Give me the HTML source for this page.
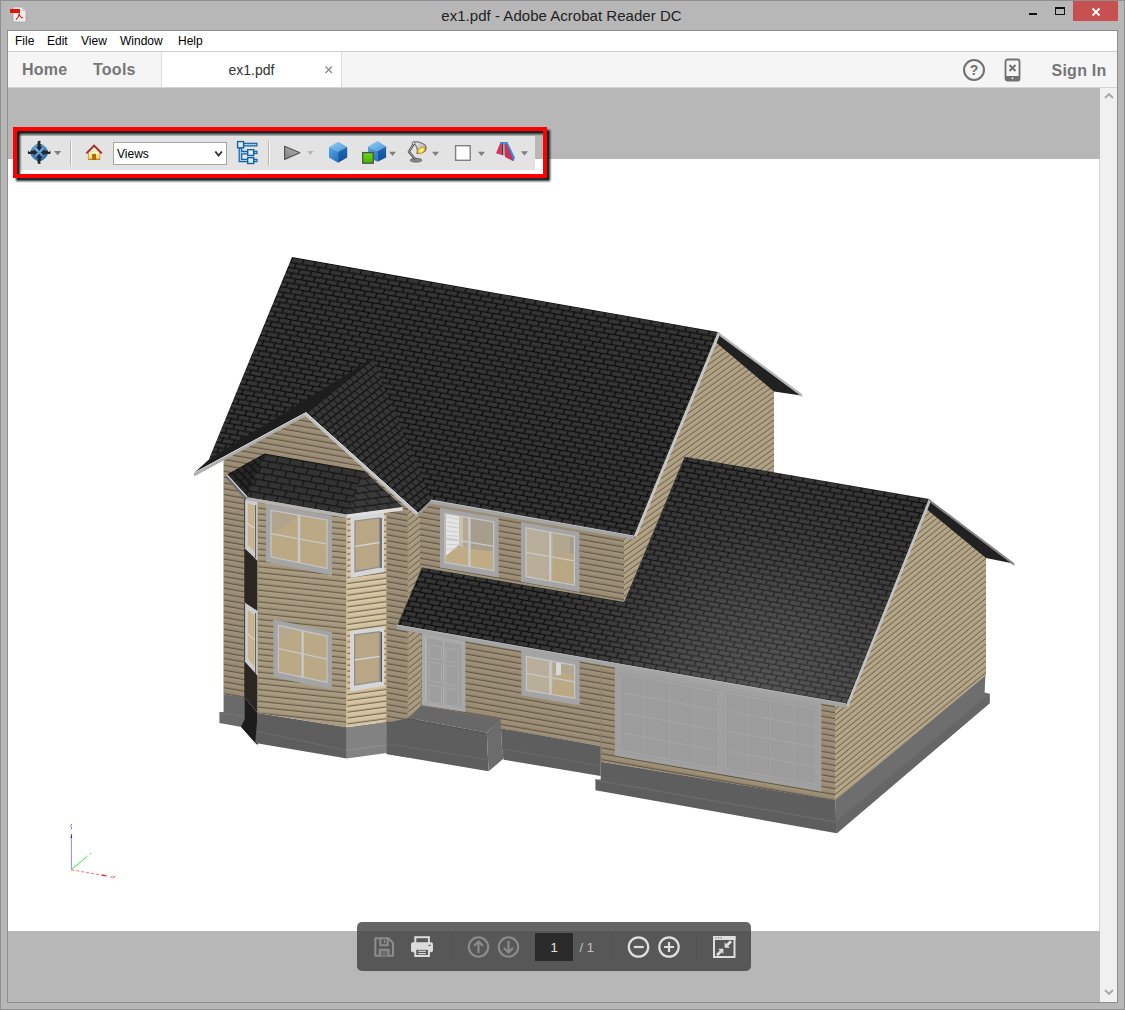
<!DOCTYPE html>
<html><head><meta charset="utf-8"><title>ex1.pdf - Adobe Acrobat Reader DC</title>
<style>
*{box-sizing:border-box;margin:0;padding:0}
html,body{width:1125px;height:1010px;overflow:hidden;background:#b7b7b7;font-family:"Liberation Sans",sans-serif}
#win{position:absolute;left:0;top:0;width:1125px;height:1010px;background:#b7b7b7;border:1px solid #8f8f8f}
.abs{position:absolute}
#title{position:absolute;left:-2px;top:6px;width:1125px;text-align:center;font-size:15px;color:#222;letter-spacing:0.03px}
#inner{position:absolute;left:6px;top:29px;width:1111px;height:973px;border:1px solid #8e8e8e;background:#b7b7b7}
#menubar{position:absolute;left:0;top:0;width:1109px;height:20px;background:#fff}
#menubar span{position:absolute;top:3px;font-size:12px;color:#000}
#tabline{position:absolute;left:0;top:20px;width:1109px;height:1px;background:#cdcdcd}
#tabbar{position:absolute;left:0;top:21px;width:1109px;height:36px;background:#f5f5f5;border-bottom:1px solid #d4d4d4}
#tab{position:absolute;left:153px;top:0;width:181px;height:35px;background:#fff;border-left:1px solid #dcdcdc;border-right:1px solid #dcdcdc}
.nav{position:absolute;top:9px;font-size:16px;font-weight:bold;color:#767676;letter-spacing:0.25px}
#doc{position:absolute;left:0;top:57px;width:1092px;height:914px;background:#b7b7b7}
#page{position:absolute;left:0;top:71px;width:1092px;height:772px;background:#fff;border-right:1px solid #d4d4d4}
#scroll{position:absolute;left:1092px;top:57px;width:17px;height:914px;background:#f0f0f0}
</style></head><body>
<div id="win">
 <!-- app icon -->
 <svg class="abs" style="left:9px;top:5px" width="18" height="18" viewBox="0 0 18 18">
  <path d="M3 1 H12 L16 5 V16 H3 Z" fill="#ececec" stroke="#9a9a9a" stroke-width="0.6"/>
  <path d="M12 1 V5 H16 Z" fill="#cfcfcf"/>
  <rect x="0" y="3" width="10" height="4" fill="#e1140a"/>
  <path d="M6 13.5 C8 12 9 9.5 9.2 7.5 C9.4 10 10.5 11.5 13 12" fill="none" stroke="#e1140a" stroke-width="1.1"/>
 </svg>
 <div id="title">ex1.pdf - Adobe Acrobat Reader DC</div>
 <!-- window controls -->
 <div class="abs" style="left:1028px;top:12px;width:8px;height:2px;background:#111"></div>
 <div class="abs" style="left:1054px;top:6px;width:10px;height:8px;border:1px solid #111;border-top-width:2px"></div>
 <div class="abs" style="left:1072px;top:0;width:45px;height:20px;background:#c75050"></div>
 <svg class="abs" style="left:1089px;top:5px" width="12" height="12" viewBox="0 0 12 12"><path d="M2.5 2.5 L9.5 9.5 M9.5 2.5 L2.5 9.5" stroke="#fff" stroke-width="1.8"/></svg>

 <div id="inner">
  <div id="menubar">
   <span style="left:7px">File</span><span style="left:39px">Edit</span><span style="left:73px">View</span><span style="left:112px">Window</span><span style="left:170px">Help</span>
  </div>
  <div id="tabline"></div>
  <div id="tabbar">
   <div class="nav" style="left:14px">Home</div>
   <div class="nav" style="left:85px">Tools</div>
   <div id="tab">
     <div class="abs" style="left:0;top:10px;width:179px;text-align:center;font-size:14px;color:#333">ex1.pdf</div>
     <svg class="abs" style="left:162px;top:13px" width="10" height="10" viewBox="0 0 10 10"><path d="M1.5 1.5 L8 8 M8 1.5 L1.5 8" stroke="#8a8a8a" stroke-width="1.4"/></svg>
   </div>
   <!-- right icons -->
   <svg class="abs" style="left:953.7px;top:5.7px" width="24" height="24" viewBox="0 0 24 24">
     <circle cx="12" cy="12" r="10" fill="none" stroke="#707070" stroke-width="2"/>
     <text x="12" y="17" font-size="14" font-weight="bold" fill="#707070" text-anchor="middle" font-family="Liberation Sans">?</text>
   </svg>
   <svg class="abs" style="left:996px;top:6px" width="18" height="26" viewBox="0 0 18 26">
     <rect x="1.5" y="1.5" width="14" height="21" rx="2" fill="#f5f5f5" stroke="#707070" stroke-width="1.8"/>
     <rect x="1.5" y="18" width="14" height="4.5" fill="#707070"/>
     <path d="M5.5 7 L11.5 13 M11.5 7 L5.5 13" stroke="#707070" stroke-width="2"/>
     <rect x="7.7" y="19.5" width="1.6" height="1.6" fill="#f5f5f5"/>
   </svg>
   <div class="nav" style="left:1043.5px;top:10px;font-weight:bold">Sign In</div>
  </div>
  <div id="doc">
    <div id="page"></div>
  </div>
  <div id="scroll">
    <svg class="abs" style="left:4px;top:4px" width="10" height="8" viewBox="0 0 10 8"><path d="M1 6 L5 2 L9 6" fill="none" stroke="#a6a6a6" stroke-width="1.8"/></svg>
    <svg class="abs" style="left:4px;top:900px" width="10" height="8" viewBox="0 0 10 8"><path d="M1 2 L5 6 L9 2" fill="none" stroke="#a6a6a6" stroke-width="1.8"/></svg>
  </div>
 </div>

 <!-- 3D house scene (absolute page coords) -->
 <svg class="abs" style="left:-1px;top:-1px" width="1125" height="1010" viewBox="0 0 1125 1010">
  <defs>
   <pattern id="sh" width="11.6" height="10" patternUnits="userSpaceOnUse" patternTransform="matrix(1,0.175,-0.407,0.97,292,257)">
     <rect width="11.6" height="10" fill="#353535"/>
     <rect y="4.2" width="11.6" height="0.8" fill="#2d2d2d"/>
     <rect y="9.2" width="11.6" height="0.8" fill="#2d2d2d"/>
     <rect y="0" width="11.6" height="1.0" fill="#0b0b0b"/>
     <rect y="5" width="11.6" height="1.0" fill="#0b0b0b"/>
     <rect x="0" y="0" width="1.25" height="5" fill="#090909"/>
     <rect x="5.8" y="5" width="1.25" height="5" fill="#090909"/>
   </pattern>

   <pattern id="sh2" width="7.6" height="10" patternUnits="userSpaceOnUse" patternTransform="matrix(0.62,-0.5,1,0.9,306,412)">
     <rect width="7.6" height="10" fill="#373737"/>
     <rect y="0" width="7.6" height="1.1" fill="#131313"/>
     <rect y="5" width="7.6" height="1.1" fill="#131313"/>
     <rect x="0" y="0" width="1.1" height="5" fill="#111"/>
     <rect x="3.8" y="5" width="1.1" height="5" fill="#111"/>
   </pattern>
   <pattern id="shb" width="13" height="12.4" patternUnits="userSpaceOnUse" patternTransform="matrix(1,0.175,-0.35,1,264.6,453.5)">
     <rect width="13" height="12.4" fill="#333"/>
     <rect y="0" width="13" height="1.3" fill="#171717"/>
     <rect y="6.2" width="13" height="1.3" fill="#171717"/>
     <rect x="0" y="0" width="1.2" height="6.2" fill="#141414"/>
     <rect x="6.5" y="6.2" width="1.2" height="6.2" fill="#141414"/>
   </pattern>
   <pattern id="shbl" width="8" height="10" patternUnits="userSpaceOnUse" patternTransform="matrix(0.7,0.75,-0.9,0.8,264.6,453.5)">
     <rect width="8" height="10" fill="#262626"/>
     <rect y="0" width="8" height="1.2" fill="#111"/>
     <rect y="5" width="8" height="1.2" fill="#111"/>
     <rect x="0" y="0" width="1.1" height="5" fill="#111"/>
     <rect x="4" y="5" width="1.1" height="5" fill="#111"/>
   </pattern>
   <pattern id="shbr" width="12" height="12.4" patternUnits="userSpaceOnUse" patternTransform="matrix(1,-0.13,0.9,1,364,471)">
     <rect width="12" height="12.4" fill="#3a3a3a"/>
     <rect y="0" width="12" height="1.3" fill="#1c1c1c"/>
     <rect y="6.2" width="12" height="1.3" fill="#1c1c1c"/>
     <rect x="0" y="0" width="1.2" height="6.2" fill="#1a1a1a"/>
     <rect x="6" y="6.2" width="1.2" height="6.2" fill="#1a1a1a"/>
   </pattern>
   <radialGradient id="lrg" gradientUnits="userSpaceOnUse" cx="765" cy="705" r="250">
     <stop offset="0" stop-color="#ffffff" stop-opacity="0.17"/>
     <stop offset="0.35" stop-color="#ffffff" stop-opacity="0.12"/>
     <stop offset="0.7" stop-color="#ffffff" stop-opacity="0.04"/>
     <stop offset="1" stop-color="#ffffff" stop-opacity="0"/>
   </radialGradient>
   <!-- siding -->
   <pattern id="sdF" width="40" height="5.85" patternUnits="userSpaceOnUse" patternTransform="matrix(1,0.175,0,1,223,460)">
     <rect width="40" height="5.85" fill="#9b8d75"/>
     <rect y="0" width="40" height="1.6" fill="#a19379"/>
     <rect y="4.05" width="40" height="0.8" fill="#897c67"/>
     <rect y="4.85" width="40" height="1.0" fill="#60564a"/>
   </pattern>
   <pattern id="sdB" width="40" height="5.85" patternUnits="userSpaceOnUse" patternTransform="matrix(1,0.105,0,1,257,497)">
     <rect width="40" height="5.85" fill="#a6987d"/>
     <rect y="0" width="40" height="1.6" fill="#ac9e82"/>
     <rect y="4.05" width="40" height="0.8" fill="#93866e"/>
     <rect y="4.85" width="40" height="1.0" fill="#665c4b"/>
   </pattern>
   <pattern id="sdR" width="40" height="5.85" patternUnits="userSpaceOnUse" patternTransform="matrix(1,-0.135,0,1,347,514)">
     <rect width="40" height="5.85" fill="#d3c2a0"/>
     <rect y="0" width="40" height="1.6" fill="#d9c8a6"/>
     <rect y="4.05" width="40" height="0.8" fill="#b3a385"/>
     <rect y="4.85" width="40" height="1.0" fill="#766b57"/>
   </pattern>
   <pattern id="sdRet" width="40" height="6.2" patternUnits="userSpaceOnUse" patternTransform="matrix(1,-0.8,0,1,408,508)">
     <rect width="40" height="6.2" fill="#a99b80"/>
     <rect y="0" width="40" height="1.6" fill="#ad9f84"/>
     <rect y="4.40" width="40" height="0.8" fill="#978a72"/>
     <rect y="5.20" width="40" height="1.0" fill="#6b614f"/>
   </pattern>
   <pattern id="sdS" width="40" height="5.7" patternUnits="userSpaceOnUse" patternTransform="matrix(1,-0.72,0,1,624,540)">
     <rect width="40" height="5.7" fill="#b0a185"/>
     <rect y="0" width="40" height="1.4" fill="#b3a487"/>
     <rect y="4.00" width="40" height="0.7" fill="#a09278"/>
     <rect y="4.70" width="40" height="1.0" fill="#6b614f"/>
   </pattern>
   <pattern id="sdS2" width="40" height="5.7" patternUnits="userSpaceOnUse" patternTransform="matrix(1,-0.81,0,1,835,801)">
     <rect width="40" height="5.7" fill="#b4a587"/>
     <rect y="0" width="40" height="1.4" fill="#b7a889"/>
     <rect y="4.00" width="40" height="0.7" fill="#a39579"/>
     <rect y="4.70" width="40" height="1.0" fill="#6b614f"/>
   </pattern>
  </defs>
  <polygon points="622.0,540.0 717.0,334.0 774.0,390.0 774.0,473.0 685.0,457.0 624.0,602.0" fill="url(#sdS)" />
<polygon points="929.0,499.0 986.0,553.0 986.0,676.0 835.0,801.0 835.0,700.0 846.0,706.0" fill="url(#sdS2)" />
<polygon points="715.5,342.0 774.0,391.5 801.0,395.5 718.5,333.0" fill="#212121" />
<polygon points="927.0,509.5 986.0,558.0 1013.0,563.5 929.5,500.0" fill="#212121" />
<polygon points="223.5,459.0 306.0,414.0 408.0,508.0 408.0,727.0 223.5,694.5" fill="url(#sdF)" />
<polygon points="408.0,508.0 421.0,513.0 421.0,716.0 408.0,727.0" fill="url(#sdRet)" />
<polygon points="420.0,500.0 624.0,534.0 624.0,606.0 420.0,570.0" fill="url(#sdF)" />
<polygon points="421.0,600.0 601.0,640.0 601.0,746.0 421.0,714.5" fill="url(#sdF)" />
<polygon points="601.0,650.0 835.0,700.0 835.0,801.0 601.0,761.7" fill="url(#sdF)" />
<line x1="601.0" y1="655.0" x2="601.0" y2="762.0" stroke="#8f8067" stroke-width="1" />
<polygon points="223.6,694.4 244.3,697.0 244.3,727.5 219.4,723.0 219.4,712.0 223.6,712.0" fill="#6a6a6a" />
<line x1="219.4" y1="712.3" x2="244.0" y2="716.5" stroke="#777" stroke-width="1" />
<polygon points="244.3,697.0 257.7,713.0 257.7,745.0 255.2,743.0 241.0,727.0 244.3,720.0" fill="#1c1c1c" />
<polygon points="257.7,713.0 346.8,727.2 346.8,758.6 255.2,743.0" fill="#5e5e5e" />
<line x1="257.0" y1="731.7" x2="346.8" y2="750.4" stroke="#6a6a6a" stroke-width="1.2" />
<polygon points="346.8,727.2 386.7,721.8 386.7,752.9 346.8,758.6" fill="#828282" />
<line x1="346.8" y1="750.4" x2="386.7" y2="744.8" stroke="#8e8e8e" stroke-width="1.2" />
<polygon points="386.7,721.8 408.2,725.0 408.2,757.6 386.7,754.0" fill="#5e5e5e" />
<polygon points="408.2,718.1 421.1,705.4 500.6,719.3 486.8,732.7" fill="#686868" />
<polygon points="408.2,718.1 486.8,732.7 488.6,771.3 386.5,754.0 386.5,723.0" fill="#5e5e5e" />
<line x1="386.5" y1="743.6" x2="487.5" y2="759.7" stroke="#696969" stroke-width="1.2" />
<line x1="408.2" y1="719.0" x2="486.8" y2="733.6" stroke="#555" stroke-width="1" />
<polygon points="486.8,732.7 500.6,719.3 502.0,748.2 503.6,758.6 488.6,771.3" fill="#6c6c6c" />
<polygon points="501.0,728.3 600.7,745.9 600.7,776.0 503.6,759.7 502.0,748.0" fill="#5e5e5e" />
<line x1="502.5" y1="749.0" x2="600.5" y2="766.0" stroke="#696969" stroke-width="1.2" />
<polygon points="600.7,745.9 601.0,761.7 835.2,800.6 836.8,833.2 595.4,790.3 595.4,779.4 600.7,779.4" fill="#5e5e5e" />
<line x1="595.4" y1="780.2" x2="835.6" y2="822.0" stroke="#6b6b6b" stroke-width="1.3" />
<polygon points="835.2,800.6 985.4,675.8 984.6,692.5 989.6,693.7 989.6,703.2 836.8,833.2 835.6,822.0" fill="#6e6e6e" />
<polygon points="835.6,822.0 989.6,693.7 989.6,703.2 836.8,833.2" fill="#666" />
<polygon points="244.3,480.0 257.7,497.0 257.7,713.0 244.3,697.0" fill="#2b2621" />
<polygon points="257.7,497.0 346.8,514.5 346.8,727.2 257.7,713.0" fill="url(#sdB)" />
<polygon points="346.8,514.5 386.7,509.0 386.7,721.8 346.8,727.2" fill="url(#sdR)" />
<line x1="346.8" y1="515.0" x2="346.8" y2="727.0" stroke="#d8c5a0" stroke-width="1" />
<line x1="386.7" y1="510.0" x2="386.7" y2="721.0" stroke="#a69477" stroke-width="1" />
<line x1="408.0" y1="510.0" x2="408.0" y2="717.0" stroke="#a08f72" stroke-width="1" />
<line x1="257.7" y1="500.0" x2="257.7" y2="713.0" stroke="#9c8b6f" stroke-width="1" />
<polygon points="266.0,504.5 332.0,515.7 332.0,575.5 266.0,561.8" fill="#a4a4a4" />
<polygon points="271.0,510.3 327.0,519.9 327.0,568.5 271.0,556.8" fill="#bba885" />
<clipPath id="c38"><polygon points="271.0,510.3 327.0,519.9 327.0,568.5 271.0,556.8"/></clipPath>
<g clip-path="url(#c38)">
<polygon points="271.0,509.0 301.0,514.0 271.0,535.0" fill="#b1a38c" />
</g>
<polygon points="271.0,510.3 327.0,519.9 327.0,568.5 271.0,556.8" fill="none" stroke="#c6c6c6" stroke-width="1.2"/>
<line x1="299.0" y1="515.1" x2="299.0" y2="562.6" stroke="#c9c9c9" stroke-width="2.4" />
<line x1="271.0" y1="533.6" x2="327.0" y2="544.2" stroke="#c9c9c9" stroke-width="1.3" />
<polygon points="350.5,517.0 384.0,513.0 384.0,571.7 350.5,578.0" fill="#d6d6d6" />
<polygon points="355.0,521.0 379.5,518.0 379.5,567.0 355.0,571.7" fill="#b9a684" />
<clipPath id="c47"><polygon points="355.0,521.0 379.5,518.0 379.5,567.0 355.0,571.7"/></clipPath>
<polygon points="355.0,521.0 379.5,518.0 379.5,567.0 355.0,571.7" fill="none" stroke="#8c8c8c" stroke-width="1.2"/>
<line x1="355.0" y1="546.3" x2="379.5" y2="542.5" stroke="#d6d6d6" stroke-width="1.3" />
<line x1="381.0" y1="518.0" x2="381.0" y2="568.0" stroke="#333" stroke-width="1.2" />
<polygon points="244.3,497.5 257.7,501.0 257.7,561.0 244.3,548.0" fill="#cdcdcd" />
<polygon points="247.8,503.0 254.6,505.5 254.6,552.0 247.8,545.0" fill="#c7b48f" />
<line x1="247.8" y1="524.0" x2="254.6" y2="528.0" stroke="#e2e2e2" stroke-width="1" />
<line x1="244.6" y1="498.0" x2="244.6" y2="548.0" stroke="#3c3c3c" stroke-width="1" />
<line x1="255.6" y1="505.0" x2="255.6" y2="558.0" stroke="#555" stroke-width="1" />
<polygon points="273.4,619.2 331.9,632.2 331.9,689.4 273.4,677.0" fill="#a4a4a4" />
<polygon points="278.4,625.3 326.9,636.1 326.9,682.3 278.4,672.1" fill="#bba885" />
<clipPath id="c58"><polygon points="278.4,625.3 326.9,636.1 326.9,682.3 278.4,672.1"/></clipPath>
<g clip-path="url(#c58)">
<polygon points="278.0,624.0 297.0,628.0 278.0,645.0" fill="#b5a893" />
</g>
<polygon points="278.4,625.3 326.9,636.1 326.9,682.3 278.4,672.1" fill="none" stroke="#c6c6c6" stroke-width="1.2"/>
<line x1="302.6" y1="630.7" x2="302.6" y2="677.2" stroke="#c9c9c9" stroke-width="2.4" />
<line x1="278.4" y1="648.7" x2="326.9" y2="659.2" stroke="#c9c9c9" stroke-width="1.3" />
<polygon points="350.1,631.0 384.2,626.7 384.2,685.7 350.1,691.4" fill="#d6d6d6" />
<polygon points="354.6,634.9 379.7,631.8 379.7,681.0 354.6,685.1" fill="#b9a684" />
<clipPath id="c67"><polygon points="354.6,634.9 379.7,631.8 379.7,681.0 354.6,685.1"/></clipPath>
<polygon points="354.6,634.9 379.7,631.8 379.7,681.0 354.6,685.1" fill="none" stroke="#8c8c8c" stroke-width="1.2"/>
<line x1="354.6" y1="660.0" x2="379.7" y2="656.4" stroke="#d6d6d6" stroke-width="1.3" />
<line x1="381.2" y1="632.0" x2="381.2" y2="682.0" stroke="#333" stroke-width="1.2" />
<polygon points="244.3,602.3 257.7,611.0 257.7,676.0 244.3,661.0" fill="#cdcdcd" />
<polygon points="247.8,610.0 254.6,615.0 254.6,667.0 247.8,658.0" fill="#c7b48f" />
<line x1="247.8" y1="634.0" x2="254.6" y2="640.0" stroke="#e2e2e2" stroke-width="1" />
<line x1="244.6" y1="603.0" x2="244.6" y2="661.0" stroke="#3c3c3c" stroke-width="1" />
<line x1="255.6" y1="613.0" x2="255.6" y2="674.0" stroke="#555" stroke-width="1" />
<polygon points="440.0,507.8 498.7,517.8 498.7,577.5 440.0,567.5" fill="#a4a4a4" />
<polygon points="445.0,513.7 493.7,521.9 493.7,570.6 445.0,562.4" fill="#a79d8c" />
<clipPath id="c78"><polygon points="445.0,513.7 493.7,521.9 493.7,570.6 445.0,562.4"/></clipPath>
<g clip-path="url(#c78)">
<polygon points="445.0,512.0 470.0,516.0 470.0,575.0 445.0,570.0" fill="#b4a894" />
<polygon points="446.0,513.5 459.0,516.0 459.0,545.0 446.0,556.0" fill="#e4e4e4" />
<polygon points="446.0,556.0 459.0,545.0 470.0,549.0 494.0,551.0 494.0,580.0 446.0,572.0" fill="#bfab85" />
<polygon points="459.0,516.0 463.0,517.0 463.0,548.0 459.0,545.0" fill="#c8bfae" />
</g>
<polygon points="445.0,513.7 493.7,521.9 493.7,570.6 445.0,562.4" fill="none" stroke="#c6c6c6" stroke-width="1.2"/>
<line x1="469.4" y1="517.8" x2="469.4" y2="566.5" stroke="#c9c9c9" stroke-width="2.4" />
<line x1="445.0" y1="538.0" x2="493.7" y2="546.3" stroke="#c9c9c9" stroke-width="1.3" />
<line x1="446.5" y1="517.0" x2="458.5" y2="519.5" stroke="#c4c4c4" stroke-width="0.8" />
<line x1="446.5" y1="521.6" x2="458.5" y2="523.7" stroke="#c4c4c4" stroke-width="0.8" />
<line x1="446.5" y1="526.2" x2="458.5" y2="527.9" stroke="#c4c4c4" stroke-width="0.8" />
<line x1="446.5" y1="530.8" x2="458.5" y2="532.1" stroke="#c4c4c4" stroke-width="0.8" />
<line x1="446.5" y1="535.4" x2="458.5" y2="536.3" stroke="#c4c4c4" stroke-width="0.8" />
<line x1="446.5" y1="540.0" x2="458.5" y2="540.5" stroke="#c4c4c4" stroke-width="0.8" />
<line x1="446.5" y1="544.6" x2="458.5" y2="544.7" stroke="#c4c4c4" stroke-width="0.8" />
<line x1="446.5" y1="549.2" x2="458.5" y2="548.9" stroke="#c4c4c4" stroke-width="0.8" />
<polygon points="521.0,522.0 579.4,532.3 579.4,592.0 521.0,581.8" fill="#a4a4a4" />
<polygon points="526.0,527.9 574.4,536.4 574.4,585.1 526.0,576.7" fill="#b8ad99" />
<clipPath id="c98"><polygon points="526.0,527.9 574.4,536.4 574.4,585.1 526.0,576.7"/></clipPath>
<g clip-path="url(#c98)">
<polygon points="553.0,530.0 580.0,535.0 580.0,560.0 553.0,556.0" fill="#b1a690" />
<polygon points="570.0,536.0 580.0,538.0 580.0,556.0 570.0,553.0" fill="#a69c8a" />
<polygon points="540.0,584.0 553.0,572.0 553.0,556.0 568.0,553.0 580.0,555.0 580.0,595.0 540.0,588.0" fill="#b9a682" />
</g>
<polygon points="526.0,527.9 574.4,536.4 574.4,585.1 526.0,576.7" fill="none" stroke="#c6c6c6" stroke-width="1.2"/>
<line x1="550.2" y1="532.1" x2="550.2" y2="580.9" stroke="#c9c9c9" stroke-width="2.4" />
<line x1="526.0" y1="552.3" x2="574.4" y2="560.8" stroke="#c9c9c9" stroke-width="1.3" />
<polygon points="521.4,650.5 579.6,661.2 579.6,705.2 521.4,695.3" fill="#a4a4a4" />
<polygon points="526.4,656.4 574.6,665.3 574.6,698.3 526.4,690.2" fill="#b9ae9a" />
<clipPath id="c109"><polygon points="526.4,656.4 574.6,665.3 574.6,698.3 526.4,690.2"/></clipPath>
<g clip-path="url(#c109)">
<polygon points="553.0,660.0 580.0,665.0 580.0,676.0 553.0,672.0" fill="#b1a690" />
<polygon points="556.0,661.0 561.0,662.0 561.0,678.0 556.0,677.0" fill="#d8d8d8" />
<polygon points="538.0,698.0 553.0,686.0 553.0,676.0 580.0,672.0 580.0,708.0 538.0,700.0" fill="#bba884" />
</g>
<polygon points="526.4,656.4 574.6,665.3 574.6,698.3 526.4,690.2" fill="none" stroke="#c6c6c6" stroke-width="1.2"/>
<line x1="550.5" y1="660.9" x2="550.5" y2="694.2" stroke="#c9c9c9" stroke-width="2.4" />
<line x1="526.4" y1="673.3" x2="574.6" y2="681.8" stroke="#c9c9c9" stroke-width="1.3" />
<polygon points="421.9,633.0 465.4,641.3 465.4,712.0 421.9,705.2" fill="#a9a9a9" />
<polygon points="426.0,638.0 461.5,645.0 461.5,708.0 426.0,702.0" fill="#9e9e9e" />
<line x1="443.7" y1="641.0" x2="443.7" y2="705.0" stroke="#b2b2b2" stroke-width="1" />
<line x1="426.0" y1="638.0" x2="426.0" y2="702.0" stroke="#bdbdbd" stroke-width="1" />
<polygon points="429.0,644.6 441.5,646.9 441.5,659.9 429.0,657.6" fill="none" stroke="#adadad" stroke-width="0.8"/>
<polygon points="429.0,661.6 441.5,663.9 441.5,682.9 429.0,680.6" fill="none" stroke="#adadad" stroke-width="0.8"/>
<polygon points="429.0,684.6 441.5,686.9 441.5,703.9 429.0,701.6" fill="none" stroke="#adadad" stroke-width="0.8"/>
<polygon points="446.0,647.8 458.5,650.2 458.5,663.2 446.0,660.8" fill="none" stroke="#adadad" stroke-width="0.8"/>
<polygon points="446.0,664.8 458.5,667.2 458.5,686.2 446.0,683.8" fill="none" stroke="#adadad" stroke-width="0.8"/>
<polygon points="446.0,687.8 458.5,690.2 458.5,707.2 446.0,704.8" fill="none" stroke="#adadad" stroke-width="0.8"/>
<polygon points="614.8,664.7 821.4,701.2 821.4,791.6 614.8,755.5" fill="#a1a1a1" />
<polygon points="619.0,672.0 720.0,690.0 720.0,770.5 619.0,752.5" fill="#9c9c9c" />
<polygon points="724.0,690.6 817.5,707.2 817.5,786.5 724.0,770.5" fill="#9c9c9c" />
<line x1="644.2" y1="679.5" x2="644.2" y2="754.0" stroke="#a6a6a6" stroke-width="0.8" />
<line x1="669.5" y1="684.0" x2="669.5" y2="758.5" stroke="#a6a6a6" stroke-width="0.8" />
<line x1="694.8" y1="688.5" x2="694.8" y2="763.0" stroke="#a6a6a6" stroke-width="0.8" />
<line x1="622.0" y1="692.6" x2="717.0" y2="710.1" stroke="#a8a8a8" stroke-width="0.8" />
<line x1="622.0" y1="712.8" x2="717.0" y2="730.2" stroke="#a8a8a8" stroke-width="0.8" />
<line x1="622.0" y1="732.9" x2="717.0" y2="750.4" stroke="#a8a8a8" stroke-width="0.8" />
<polygon points="620.5,674.0 718.5,692.0 718.5,768.5 620.5,750.5" fill="none" stroke="#a7a7a7" stroke-width="1"/>
<line x1="747.4" y1="697.8" x2="747.4" y2="771.8" stroke="#a6a6a6" stroke-width="0.8" />
<line x1="770.8" y1="701.9" x2="770.8" y2="775.9" stroke="#a6a6a6" stroke-width="0.8" />
<line x1="794.1" y1="706.1" x2="794.1" y2="780.1" stroke="#a6a6a6" stroke-width="0.8" />
<line x1="727.0" y1="711.1" x2="814.5" y2="727.0" stroke="#a8a8a8" stroke-width="0.8" />
<line x1="727.0" y1="731.1" x2="814.5" y2="746.9" stroke="#a8a8a8" stroke-width="0.8" />
<line x1="727.0" y1="751.1" x2="814.5" y2="766.7" stroke="#a8a8a8" stroke-width="0.8" />
<polygon points="725.5,692.6 816.0,709.2 816.0,784.5 725.5,768.6" fill="none" stroke="#a7a7a7" stroke-width="1"/>
<polygon points="292.0,257.0 718.0,332.0 634.0,536.0 431.0,500.0 418.0,513.0 306.0,412.5 209.0,459.0" fill="url(#sh)" />
<polygon points="306.0,412.5 372.0,359.0 431.0,500.0 418.0,513.0" fill="url(#sh2)" />
<polygon points="372.0,359.0 210.0,458.5 194.0,473.0 306.0,412.5" fill="#1d1d1d" />
<polygon points="684.6,456.8 929.0,499.0 846.0,706.0 396.6,626.7 422.0,567.6 624.0,602.0" fill="url(#sh)" />
<polygon points="684.6,456.8 929.0,499.0 846.0,706.0 396.6,626.7 422.0,567.6 624.0,602.0" fill="url(#lrg)" />
<polygon points="264.6,453.5 364.0,471.0 402.7,507.0 346.7,514.5 247.0,497.0 226.8,474.7" fill="url(#shb)" />
<polygon points="264.6,453.5 247.0,497.0 226.8,474.7" fill="url(#shbl)" />
<polygon points="364.0,471.0 402.7,507.0 346.7,514.5" fill="url(#shbr)" />
<polygon points="194.0,473.0 306.0,412.5 306.0,415.9 194.0,476.4" fill="#aeaeae" />
<line x1="194.0" y1="473.0" x2="306.0" y2="412.5" stroke="#d2d2d2" stroke-width="1" />
<polygon points="306.0,412.5 418.0,513.0 416.2,515.4 304.2,414.9" fill="#c2c2c2" />
<line x1="306.0" y1="412.5" x2="418.0" y2="513.0" stroke="#dcdcdc" stroke-width="1" />
<polygon points="418.0,513.0 431.0,500.0 431.0,503.2 418.0,516.2" fill="#9b9b9b" />
<polygon points="431.0,500.0 634.0,536.0 634.0,539.6 431.0,503.6" fill="#a4a4a4" />
<line x1="431.0" y1="500.0" x2="634.0" y2="536.0" stroke="#bcbcbc" stroke-width="1.0" />
<polygon points="718.0,332.0 634.0,536.0 636.6,536.9 720.6,332.9" fill="#c6c6c6" />
<polygon points="718.0,332.0 802.0,394.0 802.6,397.2 718.6,335.2" fill="#b4b4b4" />
<polygon points="929.0,499.0 846.0,706.0 848.4,706.8 931.4,499.8" fill="#c2c2c2" />
<polygon points="929.0,499.0 1014.0,563.0 1014.6,566.0 929.6,502.0" fill="#858585" />
<polygon points="396.6,624.6 846.0,703.4 846.0,707.8 396.6,629.0" fill="#a4a4a4" />
<line x1="396.6" y1="625.0" x2="846.0" y2="703.8" stroke="#b4b4b4" stroke-width="1.0" />
<polygon points="226.8,474.7 247.0,497.0 246.0,500.4 225.8,478.1" fill="#6e6e6e" />
<line x1="226.8" y1="474.7" x2="247.0" y2="497.0" stroke="#d4d4d4" stroke-width="1.2" />
<polygon points="247.0,497.0 346.7,514.5 346.7,517.9 247.0,500.4" fill="#b4b4b4" />
<polygon points="346.7,514.5 402.7,507.0 402.7,510.4 346.7,517.9" fill="#dedede" />
<line x1="71.4" y1="869.6" x2="71.4" y2="834.0" stroke="#8a8aff" stroke-width="1" />
<polygon points="70.6,838.0 72.2,838.0 71.4,833.4" fill="#2020ff" />
<path d="M71.8 824 L70.6 826 L71.8 828 L71 829.6" fill="none" stroke="#5a5aff" stroke-width="0.8"/>
<line x1="71.4" y1="869.6" x2="87.6" y2="856.0" stroke="#30f030" stroke-width="1" />
<circle cx="90.4" cy="853.6" r="0.7" fill="#30f030"/>
<line x1="71.4" y1="869.9" x2="106.0" y2="875.8" stroke="#ff7070" stroke-width="1" stroke-dasharray="3 2"/>
<line x1="102.0" y1="875.2" x2="106.5" y2="876.0" stroke="#ff1010" stroke-width="1.2" />
<path d="M110.5 877.5 L112.5 876 M112.5 877.8 L115.5 876.2" fill="none" stroke="#ff3030" stroke-width="0.9"/>
 </svg>
  <!-- 3D toolbar -->
 <div class="abs" style="left:18px;top:134.6px;width:516px;height:34.2px;background:#e3e3e3"></div>
 <!-- red highlight box w/ shadow -->
 <svg class="abs" style="left:-1px;top:-1px;pointer-events:none" width="1125" height="1010" viewBox="0 0 1125 1010">
  <defs>
   <filter id="rsh" x="-5%" y="-20%" width="110%" height="150%">
     <feGaussianBlur in="SourceAlpha" stdDeviation="1.1" result="b"/>
     <feOffset in="b" dx="3" dy="3" result="o"/>
     <feComponentTransfer in="o" result="s"><feFuncA type="linear" slope="1.0"/></feComponentTransfer>
     <feFlood flood-color="#101818" result="c"/>
     <feComposite in="c" in2="s" operator="in" result="sh"/>
     <feMerge><feMergeNode in="sh"/><feMergeNode in="SourceGraphic"/></feMerge>
   </filter>
  </defs>
  <rect x="15" y="129" width="530" height="47" fill="none" stroke="#fe0000" stroke-width="4" filter="url(#rsh)"/>
 </svg>
 <!-- toolbar icons -->
 <svg class="abs" style="left:-1px;top:-1px" width="560" height="200" viewBox="0 0 560 200">
  <defs>
   <radialGradient id="navg" cx="0.45" cy="0.35" r="0.65"><stop offset="0" stop-color="#79b8ea"/><stop offset="0.6" stop-color="#3e88c8"/><stop offset="1" stop-color="#1f5f9f"/></radialGradient>
   <linearGradient id="cubeT" x1="0" y1="0" x2="1" y2="1"><stop offset="0" stop-color="#93cdf6"/><stop offset="1" stop-color="#4a97d9"/></linearGradient>
   <linearGradient id="cubeL" x1="0" y1="0" x2="0.6" y2="1"><stop offset="0" stop-color="#5aa6e2"/><stop offset="1" stop-color="#2b78c4"/></linearGradient>
   <linearGradient id="cubeR" x1="0" y1="0" x2="0" y2="1"><stop offset="0" stop-color="#2169b4"/><stop offset="1" stop-color="#0f4f98"/></linearGradient>
   <linearGradient id="homeg" x1="0" y1="0" x2="0" y2="1"><stop offset="0" stop-color="#fffbd0"/><stop offset="1" stop-color="#f3cf5a"/></linearGradient>
   <linearGradient id="grn" x1="0" y1="0" x2="0" y2="1"><stop offset="0" stop-color="#6ad812"/><stop offset="1" stop-color="#49b400"/></linearGradient>
   <linearGradient id="playg" x1="0" y1="1" x2="1" y2="0"><stop offset="0" stop-color="#7c7c7c"/><stop offset="1" stop-color="#bdbdbd"/></linearGradient>
   <linearGradient id="boxg" x1="0" y1="0" x2="1" y2="1"><stop offset="0" stop-color="#ffffff"/><stop offset="1" stop-color="#c4dcf2"/></linearGradient>
   <linearGradient id="shade" x1="0" y1="0" x2="1" y2="1"><stop offset="0" stop-color="#f2f2f2"/><stop offset="1" stop-color="#9a9a9a"/></linearGradient>
  </defs>
  <!-- nav icon: blue ball + 4 inward arrows -->
  <g transform="translate(39.2,152.4)">
    <path d="M0 -9.4 Q7 -7 9.4 0 Q7 7 0 9.4 Q-7 7 -9.4 0 Q-7 -7 0 -9.4 Z" fill="url(#navg)"/>
    <g fill="#262626">
     <g id="arw"><path d="M-1.6 -10.9 Q0 -12.2 1.6 -10.9 L1.6 -5.6 L3.1 -5.6 L0 -1.4 L-3.1 -5.6 L-1.6 -5.6 Z"/></g>
     <use href="#arw" transform="rotate(90)"/><use href="#arw" transform="rotate(180)"/><use href="#arw" transform="rotate(270)"/>
    </g>
    <g fill="#e8e8e8"><circle cx="1.9" cy="-9.4" r="0.9"/><circle cx="1.9" cy="9.4" r="0.9"/><circle cx="-9.6" cy="-1.4" r="0.9"/><circle cx="9.6" cy="-1.4" r="0.9"/></g>
  </g>
  <path d="M54 151 H61.2 L57.6 155.2 Z" fill="#7f7f7f"/>
  <rect x="70" y="141" width="1" height="25" fill="#b9b9b9"/><rect x="71" y="141" width="1" height="25" fill="#f6f6f6"/>
  <!-- home -->
  <g>
    <path d="M88.4 151 H99.8 V159.4 H88.4 Z" fill="url(#homeg)" stroke="#d29a38" stroke-width="0.9"/>
    <path d="M88 159.4 H100.2" stroke="#c97a1c" stroke-width="1"/>
    <rect x="92.4" y="154.2" width="3.4" height="5" fill="#a8700f" stroke="#8a5a0a" stroke-width="0.5"/>
    <path d="M94.1 147 L89.5 151.6 H98.7 Z" fill="#fff9cc"/>
    <path d="M86.4 153.4 L94.1 145.6 L101.8 153.4" fill="none" stroke="#a92a30" stroke-width="2" stroke-linejoin="miter"/>
  </g>
  <!-- views select -->
  <rect x="113.500" y="142.500" width="113" height="22" fill="#fff" stroke="#a6a6a6"/>
  <text x="117" y="158" font-family="Liberation Sans" font-size="12" fill="#000">Views</text>
  <path d="M215.300 151.500 L218.600 155.600 L221.900 151.500" fill="none" stroke="#333" stroke-width="1.900"/>
  <!-- tree icon -->
  <g stroke="#1463a5" stroke-width="1.200">
    <rect x="243.500" y="143.300" width="13.400" height="2.600" fill="#9fcbee"/>
    <path d="M239.200 148 H241.700 V151.400 H248 V153.800 H241.700 V159.300 H248 V161.700 H239.200 Z" fill="#9fcbee"/>
    <rect x="253.500" y="151.300" width="3.500" height="2.200" fill="#9fcbee"/>
    <rect x="253.500" y="159.400" width="3.500" height="2.200" fill="#9fcbee"/>
    <rect x="237.600" y="141.600" width="6" height="6.200" fill="url(#boxg)" stroke-width="1.400"/>
    <rect x="247.700" y="149.700" width="6" height="5.800" fill="url(#boxg)" stroke-width="1.400"/>
    <rect x="247.700" y="157.700" width="6" height="5.800" fill="url(#boxg)" stroke-width="1.400"/>
  </g>
  <rect x="268" y="141" width="1" height="25" fill="#b9b9b9"/><rect x="269" y="141" width="1" height="25" fill="#f6f6f6"/>
  <!-- play -->
  <path d="M284.600 146.300 L299.800 152.800 L284.600 159.400 Z" fill="url(#playg)" stroke="#4e4e4e" stroke-width="1.100" stroke-linejoin="round"/>
  <path d="M307 151 H313.800 L310.400 155 Z" fill="#b6b6b6"/>
  <!-- cube -->
  <g>
    <path d="M338.100 141.800 L347.200 146.900 L338.100 151.700 L329 146.900 Z" fill="url(#cubeT)"/>
    <path d="M329 146.900 L338.100 151.700 L338.100 162.700 L329 157.600 Z" fill="url(#cubeL)"/>
    <path d="M347.200 146.900 L338.100 151.700 L338.100 162.700 L347.200 157.600 Z" fill="url(#cubeR)"/>
  </g>
  <!-- cube + green -->
  <g>
    <path d="M377.600 141 L386.100 146.400 L377.200 151.200 L368 146.400 Z" fill="url(#cubeT)"/>
    <path d="M368 146.400 L377.200 151.200 L377.600 161.700 L368 157 Z" fill="url(#cubeL)"/>
    <path d="M386.100 146.400 L377.200 151.200 L377.600 161.700 L386.100 157.600 Z" fill="url(#cubeR)"/>
  </g>
  <rect x="362.700" y="152.600" width="10.600" height="10.600" fill="url(#grn)" stroke="#4f4f4f" stroke-width="1.300"/>
  <path d="M389.100 151.700 H396 L392.550 156 Z" fill="#7f7f7f"/>
  <!-- lamp -->
  <g>
    <ellipse cx="416" cy="160.200" rx="5.800" ry="1.900" fill="#8a8a8a" stroke="#5a5a5a" stroke-width="0.800"/>
    <path d="M415.500 159.500 L408.800 151.800 L413.800 143.800" fill="none" stroke="#4a4a4a" stroke-width="2.200" stroke-linejoin="round"/>
    <path d="M415.500 159.500 L408.800 151.800 L413.800 143.800" fill="none" stroke="#d0d0d0" stroke-width="0.700"/>
    <path d="M413 142.200 Q419 140.500 425.800 145.500 Q427 149.500 424.500 151.800 L417 153.600 Q418.500 147 413 142.200 Z" fill="url(#shade)" stroke="#4a4a4a" stroke-width="0.900"/>
    <ellipse cx="421.300" cy="150.400" rx="4.300" ry="2.700" transform="rotate(-38 421.300 150.400)" fill="#ffd632" stroke="#a8851c" stroke-width="0.600"/>
    <ellipse cx="421.600" cy="150.200" rx="1.800" ry="1.100" transform="rotate(-38 421.600 150.200)" fill="#fff6c8"/>
    <circle cx="413.600" cy="143.300" r="1.400" fill="#e6e6e6" stroke="#4a4a4a" stroke-width="0.700"/>
  </g>
  <path d="M432 151.700 H439 L435.500 156 Z" fill="#7f7f7f"/>
  <!-- white square -->
  <rect x="455.600" y="145.700" width="14.600" height="14.600" fill="#fff" stroke="#808080" stroke-width="1.400"/>
  <path d="M477.900 151.700 H485 L481.450 156 Z" fill="#7f7f7f"/>
  <!-- cross section -->
  <g>
    <path d="M500.300 142.700 L496 153.300 L501.900 155 L501.900 142.700 Z" fill="#d4385f"/>
    <path d="M501.900 142.700 H504.500 V155.300 L501.900 155 Z" fill="#3a3a3a"/>
    <path d="M503.200 142.700 H504.500 V155.300 L503.200 155.200 Z" fill="#c9c9c9"/>
    <path d="M504.500 143.200 L507 143.200 L514 157.800 L513.400 161.300 L505 157 Z" fill="#cf3059"/>
    <path d="M500.100 142 L507.400 142 L514.900 157.600 L513.600 161.500 L512.700 158.200 L506.300 143.600 L500.600 143.500 Z" fill="#2b8fe4"/>
  </g>
  <path d="M521 151.200 H528 L524.500 155.400 Z" fill="#7f7f7f"/>
 </svg>

 <!-- bottom floating toolbar -->
 <div class="abs" style="left:356px;top:921px;width:394px;height:49px;background:rgba(62,62,62,0.80);border-radius:5px"></div>
 <svg class="abs" style="left:355px;top:920px" width="396" height="51" viewBox="356 921 396 51">
  <!-- save -->
  <g fill="none" stroke="#8c8c8c" stroke-width="2.1" stroke-linejoin="round">
    <path d="M375.300 938.300 H388.300 L393 943 V955.800 H375.300 Z"/>
    <path d="M380.300 938.300 V945.300 H387.700 V938.300"/>
    <path d="M379.800 955.800 V949.800 H388.600 V955.800" fill="#6c6c6c"/>
  </g>
  <rect x="383.800" y="940" width="1.600" height="3.200" fill="#8c8c8c"/>
  <!-- print -->
  <g>
    <rect x="415.300" y="937.200" width="13.600" height="7" fill="#585858" stroke="#dcdcdc" stroke-width="2"/>
    <rect x="411" y="942.200" width="22" height="10" rx="2" fill="#dcdcdc"/>
    <rect x="415.300" y="948.800" width="13.600" height="7.200" fill="#585858" stroke="#dcdcdc" stroke-width="2"/>
    <rect x="418.300" y="950.700" width="7.600" height="1.200" fill="#dcdcdc"/><rect x="418.300" y="953" width="7.600" height="1.200" fill="#dcdcdc"/>
    <rect x="428.600" y="944.800" width="2" height="1.300" fill="#585858"/>
  </g>
  <rect x="451" y="934" width="1" height="27" fill="#525252"/>
  <!-- up / down -->
  <g fill="none" stroke="#8c8c8c" stroke-width="2.100">
    <circle cx="478.500" cy="947" r="9.700"/>
    <path d="M478.500 953 V942 M474 946 L478.500 941.500 L483 946"/>
    <circle cx="508.500" cy="947" r="9.700"/>
    <path d="M508.500 941 V952 M504 948 L508.500 952.500 L513 948"/>
  </g>
  <!-- page box -->
  <rect x="535" y="933" width="38" height="28" fill="#2a2a2a"/>
  <text x="554" y="951.500" font-family="Liberation Sans" font-size="13" fill="#e6e6e6" text-anchor="middle">1</text>
  <text x="579.500" y="951.500" font-family="Liberation Sans" font-size="13" fill="#c4c4c4">/ 1</text>
  <rect x="611" y="934" width="1" height="27" fill="#525252"/>
  <!-- zoom -->
  <g fill="none" stroke="#e0e0e0" stroke-width="2.200">
    <circle cx="638.500" cy="947" r="9.700"/><path d="M633.800 947 H643.800"/>
    <circle cx="669" cy="947" r="9.700"/><path d="M664 947 H674 M669 942 V952"/>
  </g>
  <rect x="696" y="934" width="1" height="27" fill="#525252"/>
  <!-- fit -->
  <g>
    <rect x="714" y="937" width="20.500" height="20" fill="none" stroke="#dedede" stroke-width="2"/>
    <rect x="713" y="936" width="22.500" height="4" fill="#dedede"/>
    <rect x="715.500" y="937.300" width="1.200" height="1.200" fill="#777"/><rect x="718" y="937.300" width="1.200" height="1.200" fill="#777"/><rect x="720.500" y="937.300" width="1.200" height="1.200" fill="#777"/>
    <path d="M724.600 947.700 V942.300 L729.900 947.700 Z" fill="#dedede"/>
    <path d="M727 945.200 L731 941.200" stroke="#dedede" stroke-width="2.800"/>
    <path d="M723.400 948.800 H718.100 L723.400 954.100 Z" fill="#dedede"/>
    <path d="M720.900 951.300 L717 955.200" stroke="#dedede" stroke-width="2.800"/>
  </g>
 </svg>

</div>
</body></html>
